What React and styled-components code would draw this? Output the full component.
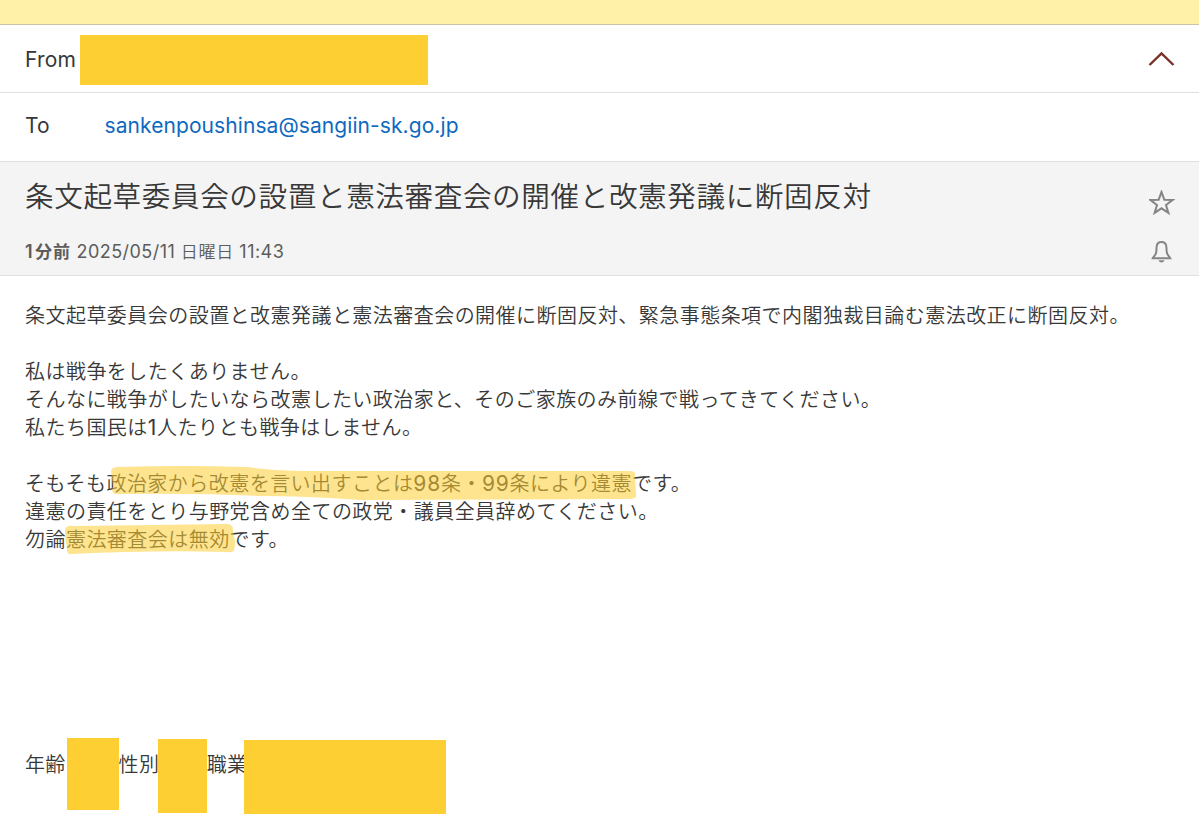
import React from "react";
import styled, { createGlobalStyle } from "styled-components";

const subject = "条文起草委員会の設置と憲法審査会の開催と改憲発議に断固反対";

const App = () => {
	return (
		<>
			<GlobalStyle />
			<Page>
				<Banner />
				<FromRow>
					<FromLabel>From</FromLabel>
					<Redacted $width={348} $height={50} />
					<Chevron />
				</FromRow>
				<ToRow>
					<ToLabel>To</ToLabel>
					<Address>sankenpoushinsa@sangiin-sk.go.jp</Address>
				</ToRow>
				<SubjectPanel>
					<div>
						<Subject>{subject}</Subject>
						<DateLine>
							<b>
								1<BoldKanji>分前</BoldKanji>
							</b>
							<span>
								2025/05/11 <Kanji>日曜日</Kanji> 11:43
							</span>
						</DateLine>
					</div>
					<Actions>
						<Star />
						<Bell />
					</Actions>
				</SubjectPanel>
				<Body>
					<p>
						条文起草委員会の設置と改憲発議と憲法審査会の開催に断固反対、緊急事態条項で内閣独裁目論む憲法改正に断固反対。
					</p>
					<p>
						私は戦争をしたくありません。
						<br />
						そんなに戦争がしたいなら改憲したい政治家と、そのご家族のみ前線で戦ってきてください。
						<br />
						私たち国民は<Digits>1</Digits>人たりとも戦争はしません。
					</p>
					<p>
						そもそも
						<Marked>
							政治家から改憲を言い出すことは<Digits>98</Digits>条・
							<Digits>99</Digits>条により違憲
							<Marker
								$left={5}
								$top={-6}
								width="526"
								height="36"
								viewBox="0 0 526 36"
							>
								<path d="M0 5 Q1 1 7 1 Q70 -1 136 1 Q158 4 190 5 L518 5 Q525 5 524 9 L525 30 Q525 33 518 33 L250 34 Q190 30 150 30 Q90 27 4 28 Q0 27 2 20 Z" />
							</Marker>
						</Marked>
						です。
						<br />
						違憲の責任をとり与野党含め全ての政党・議員全員辞めてください。
						<br />
						勿論
						<Marked>
							憲法審査会は無効
							<Marker
								$left={-1}
								$top={-4}
								width="171"
								height="33"
								viewBox="0 0 171 33"
							>
								<path d="M0 5 Q2 1 8 2 Q90 1 162 0 Q168 0 168 6 L170 18 Q170 23 169 26 Q168 29 162 28 Q90 26 7 30 Q1 31 2 24 L0 13 Z" />
							</Marker>
						</Marked>
						です。
					</p>
				</Body>
				<Profile>
					<span>年齢</span>
					<Redacted $width={52} $height={72} $left={1} />
					<span>性別</span>
					<Redacted $width={49} $height={74} $top={1} $left={-1.5} />
					<span>職業</span>
					<Redacted $width={202} $height={74} $top={2} $left={-3.5} />
				</Profile>
			</Page>
		</>
	);
};

const Chevron = () => (
	<ChevronSvg width="28" height="18" viewBox="0 0 28 18">
		<path d="M2.5 14 L14.5 2.4 L26.5 14" />
	</ChevronSvg>
);

const Star = () => (
	<ActionSvg width="26" height="26" viewBox="0 0 26 26">
		<path d="M12.5 2 L15.3 9.7 L23.7 9.9 L17 15 L19.4 22.9 L12.5 18.3 L5.6 22.9 L8 15 L1.3 9.9 L9.7 9.7 Z" />
	</ActionSvg>
);

const Bell = () => (
	<ActionSvg width="26" height="26" viewBox="0 0 26 26">
		<path d="M3.8 20.2 C4.7 18 7.1 17.2 7.3 13.8 L7.6 9 C7.8 5.7 9.4 4 12.5 4 C15.6 4 17.2 5.7 17.4 9 L17.7 13.8 C17.9 17.2 20.3 18 21.2 20.2 Z" />
		<path className="clapper" d="M9.5 22.2 H15.5 Q14.7 24.4 12.5 24.4 Q10.3 24.4 9.5 22.2 Z" />
	</ActionSvg>
);

const GlobalStyle = createGlobalStyle`
	* {
		box-sizing: border-box;
	}
	body {
		margin: 0;
		background-color: #fff;
		color: #383838;
		font-family: Inter, "Noto Sans CJK JP", sans-serif;
	}
`;

const Page = styled.div`
	display: flex;
	flex-direction: column;
	height: 823px;
	overflow: hidden;
`;

const Banner = styled.div`
	height: 25px;
	background-color: #fff1a8;
	border-bottom: 1px solid #cbc2ac;
`;

const AddressRow = styled.div`
	display: flex;
	align-items: center;
	padding: 0 24px 0 25px;
	border-bottom: 1px solid #dfdfdf;
	font-size: 21px;
`;

const FromRow = styled(AddressRow)`
	height: 68px;
	padding-top: 2px;
`;

const ToRow = styled(AddressRow)`
	height: 69px;
	padding-bottom: 4px;
`;

const FromLabel = styled.span`
	width: 55px;
	padding-bottom: 1px;
	letter-spacing: 0.2px;
`;

const ToLabel = styled.span`
	width: 79.5px;
`;

const Address = styled.span`
	color: #0f69bf;
	letter-spacing: 0.08px;
`;

const Redacted = styled.div`
	flex: none;
	width: ${(props) => props.$width}px;
	height: ${(props) => props.$height}px;
	margin-top: ${(props) => props.$top || 0}px;
	margin-left: ${(props) => props.$left || 0}px;
	background-color: #fdcf32;
`;

const ChevronSvg = styled.svg`
	margin-left: auto;
	fill: none;
	stroke: #773126;
	stroke-width: 2.4;
`;

const SubjectPanel = styled.div`
	display: flex;
	justify-content: space-between;
	height: 114px;
	padding: 14px 24px 0 25px;
	background-color: #f4f4f4;
	border-bottom: 1px solid #e0e0e0;
`;

const Subject = styled.div`
	font-size: 28.6px;
	font-weight: 350;
	line-height: 42px;
	letter-spacing: 0.6px;
	white-space: nowrap;
`;

const DateLine = styled.div`
	display: flex;
	gap: 5.5px;
	margin-top: 21px;
	color: #5c5c5c;
	font-size: 18px;
	line-height: 26px;
	letter-spacing: 0.45px;
	b {
		font-weight: 600;
	}
`;

const Kanji = styled.span`
	font-size: 17px;
	font-weight: 350;
	letter-spacing: 0.7px;
`;

const BoldKanji = styled.span`
	margin-left: 2px;
	font-size: 17px;
	letter-spacing: 1px;
`;

const Actions = styled.div`
	display: flex;
	flex-direction: column;
	gap: 22px;
	padding-top: 14px;
`;

const ActionSvg = styled.svg`
	fill: none;
	stroke: #858585;
	stroke-width: 2;
	.clapper {
		fill: #858585;
		stroke: none;
	}
`;

const Body = styled.div`
	padding: 26px 25px 0;
	font-size: 20px;
	font-weight: 350;
	line-height: 28px;
	letter-spacing: 0.46px;
	white-space: nowrap;
	p {
		margin: 0 0 28px;
	}
`;

const Digits = styled.span`
	font-size: 21px;
	font-weight: 400;
	letter-spacing: 0.8px;
	line-height: 1;
`;

const Marked = styled.span`
	position: relative;
`;

// highlighter stroke painted over the words
const Marker = styled.svg`
	position: absolute;
	left: ${(props) => props.$left}px;
	top: ${(props) => props.$top}px;
	fill: rgba(253, 206, 50, 0.55);
`;

const Profile = styled.div`
	display: flex;
	align-items: flex-start;
	margin-top: 156px;
	padding-left: 25px;
	font-size: 20px;
	font-weight: 350;
	letter-spacing: 0.3px;
	line-height: 28px;
	span {
		padding-top: 13px;
	}
`;

export default App;
